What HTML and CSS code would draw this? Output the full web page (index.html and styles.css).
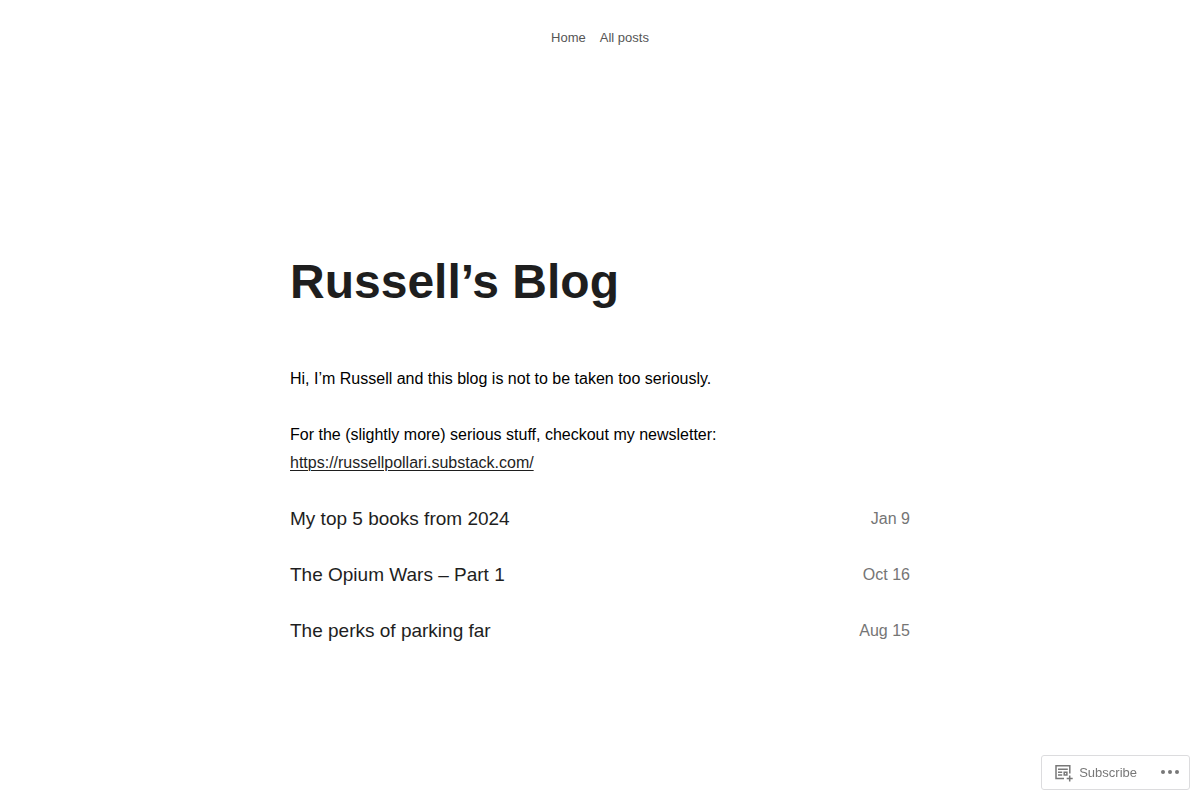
FILE: index.html
```html
<!DOCTYPE html>
<html lang="en">
<head>
	<meta charset="utf-8">
	<meta name="viewport" content="width=device-width, initial-scale=1">
	<title>Russell’s Blog</title>
	<link rel="stylesheet" href="styles.css">
</head>
<body>
	<header class="site-header">
		<nav class="site-nav">
			<a href="#">Home</a>
			<a href="#posts">All posts</a>
		</nav>
	</header>

	<main class="content">
		<h1>Russell’s Blog</h1>
		<p>Hi, I’m Russell and this blog is not to be taken too seriously.</p>
		<p>For the (slightly more) serious stuff, checkout my newsletter:<br>
			<a class="newsletter" href="https://russellpollari.substack.com/">https://russellpollari.substack.com/</a></p>

		<ul class="posts" id="posts">
			<li>
				<a href="#">My top 5 books from 2024</a>
				<time datetime="2025-01-09">Jan 9</time>
			</li>
			<li>
				<a href="#">The Opium Wars – Part 1</a>
				<time datetime="2024-10-16">Oct 16</time>
			</li>
			<li>
				<a href="#">The perks of parking far</a>
				<time datetime="2024-08-15">Aug 15</time>
			</li>
		</ul>
	</main>

	<div class="actionbar">
		<button type="button" class="subscribe">
			<svg width="20" height="20" viewBox="0 0 20 20" fill="none" stroke="currentColor" stroke-width="1.5" aria-hidden="true">
				<path d="M11 15.500H3V2.700H16.800V10.500"/>
				<path d="M5 6.200H14.800M5 9.200H9.200M5 12H9.200"/>
				<path d="M11.200 9.200H13.900V11.900H11.200Z"/>
				<path d="M16.700 12.500V18.500M13.700 15.500H19.700"/>
			</svg>
			<span>Subscribe</span>
		</button>
		<button type="button" class="more" aria-label="More options">
			<svg width="20" height="7" viewBox="0 0 20 7" fill="currentColor" aria-hidden="true">
				<circle cx="3" cy="3" r="2"/>
				<circle cx="10" cy="3" r="2"/>
				<circle cx="17" cy="3" r="2"/>
			</svg>
		</button>
	</div>
</body>
</html>
```

FILE: styles.css
```css
body {
	margin: 0;
	background-color: #fff;
	color: #000;
	font-family: "Liberation Sans", Arial, sans-serif;
	font-size: 16px;
	line-height: 28px;
}
a {
	color: #1e1e1e;
}
.site-header {
	padding: 24px 20px;
}
.site-nav {
	display: flex;
	justify-content: center;
	gap: 14px;
	font-size: 13px;
}
.site-nav a {
	color: #555;
	text-decoration: none;
}
.content {
	max-width: 620px;
	margin: 0 auto;
	padding: 177px 20px 80px;
}
h1 {
	margin: 0 0 54px;
	color: #1e1e1e;
	font-size: 48px;
	line-height: 58px;
}
p {
	margin: 0 0 28px;
}
.newsletter {
	text-decoration: underline;
	text-underline-offset: 2px;
	text-decoration-thickness: 1px;
}
.posts {
	display: flex;
	flex-direction: column;
	gap: 28px;
	margin: 0;
	padding: 0;
	list-style: none;
}
.posts li {
	display: flex;
	justify-content: space-between;
	gap: 20px;
}
.posts a {
	font-size: 19px;
	text-decoration: none;
}
.posts time {
	color: #757575;
	white-space: nowrap;
}
.actionbar {
	position: fixed;
	right: 10px;
	bottom: 10px;
	display: flex;
	border: 1px solid #dcdcde;
	border-radius: 3px;
	background-color: #fff;
}
.actionbar button {
	display: flex;
	align-items: center;
	height: 33px;
	border: 0;
	background: none;
	color: #787878;
	font-family: inherit;
	font-size: 13px;
	cursor: pointer;
}
.subscribe {
	gap: 6px;
	padding: 0 12px 0 11px;
}
.more {
	padding: 0 9px 0 11px;
}
```
